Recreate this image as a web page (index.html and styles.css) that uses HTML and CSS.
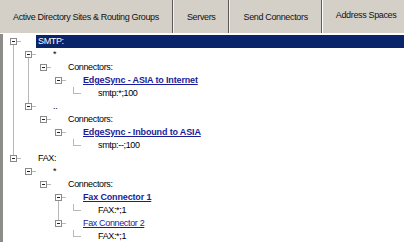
FILE: index.html
```html
<!DOCTYPE html>
<html lang="en">
<head>
    <meta charset="UTF-8">
    <title>Address Spaces</title>
    <link rel="stylesheet" href="styles.css">
</head>
<body>
    <div class="tabs">
        <div class="tab">Active Directory Sites &amp; Routing Groups</div>
        <div class="tab">Servers</div>
        <div class="tab">Send Connectors</div>
        <div class="tab active">Address Spaces</div>
    </div>

    <div class="panel">
        <ul class="tree">
            <li class="more">
                <div class="row"><span class="twist"><span class="box"></span></span><span class="label sel">SMTP:</span></div>
                <ul>
                    <li class="more">
                        <div class="row"><span class="twist"><span class="box"></span></span><span class="label">*</span></div>
                        <ul>
                            <li>
                                <div class="row"><span class="twist"><span class="box"></span></span><span class="label">Connectors:</span></div>
                                <ul>
                                    <li>
                                        <div class="row"><span class="twist"><span class="box"></span></span><a class="label link strong">EdgeSync - ASIA to Internet</a></div>
                                        <ul>
                                            <li><div class="row"><span class="twist leaf"></span><span class="label">smtp:*;100</span></div></li>
                                        </ul>
                                    </li>
                                </ul>
                            </li>
                        </ul>
                    </li>
                    <li>
                        <div class="row"><span class="twist"><span class="box"></span></span><span class="label">..</span></div>
                        <ul>
                            <li>
                                <div class="row"><span class="twist"><span class="box"></span></span><span class="label">Connectors:</span></div>
                                <ul>
                                    <li>
                                        <div class="row"><span class="twist"><span class="box"></span></span><a class="label link strong">EdgeSync - Inbound to ASIA</a></div>
                                        <ul>
                                            <li><div class="row"><span class="twist leaf"></span><span class="label">smtp:--;100</span></div></li>
                                        </ul>
                                    </li>
                                </ul>
                            </li>
                        </ul>
                    </li>
                </ul>
            </li>
            <li>
                <div class="row"><span class="twist"><span class="box"></span></span><span class="label">FAX:</span></div>
                <ul>
                    <li>
                        <div class="row"><span class="twist"><span class="box"></span></span><span class="label">*</span></div>
                        <ul>
                            <li>
                                <div class="row"><span class="twist"><span class="box"></span></span><span class="label">Connectors:</span></div>
                                <ul>
                                    <li class="more">
                                        <div class="row"><span class="twist"><span class="box"></span></span><a class="label link strong">Fax Connector 1</a></div>
                                        <ul>
                                            <li><div class="row"><span class="twist leaf"></span><span class="label">FAX:*;1</span></div></li>
                                        </ul>
                                    </li>
                                    <li>
                                        <div class="row"><span class="twist"><span class="box"></span></span><a class="label link">Fax Connector 2</a></div>
                                        <ul>
                                            <li><div class="row"><span class="twist leaf"></span><span class="label">FAX:*;1</span></div></li>
                                        </ul>
                                    </li>
                                </ul>
                            </li>
                        </ul>
                    </li>
                </ul>
            </li>
        </ul>
    </div>
</body>
</html>
```

FILE: styles.css
```css
body {
    margin: 0;
    font-family: "Liberation Sans", Arial, sans-serif;
    font-size: 9px;
    letter-spacing: -0.35px;
    color: #000;
    background: #fff;
    overflow: hidden;
}

/* tab strip */
.tabs {
    display: flex;
    height: 33px;
    background: #d4d0c8;
    border-bottom: 1px solid #fff;
}
.tab {
    padding: 0 13px;
    line-height: 34px;
    color: #111;
    border-right: 1px solid #5c5b57;
    white-space: nowrap;
}
.tab + .tab {
    border-left: 1px solid #f2f1ee;
}
.tab.active {
    line-height: 31px;
    border-left: 1px solid #fff;
    border-right: 1px solid #3f3e3b;
}

/* tree */
.panel {
    border-left: 3px solid #8e8c88;
    padding-top: 1px;
    height: 208px;
}
.tree, .tree ul {
    list-style: none;
    margin: 0;
    padding: 0;
}
.tree ul {
    padding-left: 15px;
}
.tree li {
    position: relative;
}
.tree li.more::after {
    content: "";
    position: absolute;
    left: 10px;
    top: 6px;
    bottom: -7px;
    border-left: 1px solid #b8b8b8;
}
.row {
    display: flex;
    align-items: center;
    height: 13px;
}
.twist {
    display: flex;
    align-items: center;
    width: 18px;
    height: 13px;
    flex: none;
}
.twist::after {
    content: "";
    flex: 1;
    border-top: 1px solid #b8b8b8;
}
.box {
    position: relative;
    z-index: 1;
    box-sizing: border-box;
    width: 7px;
    height: 7px;
    margin-left: 7px;
    border: 1px solid #8a8a8a;
    background: #fff;
}
.box::after {
    content: "";
    position: absolute;
    left: 1px;
    top: 2px;
    width: 3px;
    height: 1px;
    background: #222;
}
.twist.leaf {
    align-items: flex-start;
}
.twist.leaf::before {
    content: "";
    width: 7px;
    height: 6px;
    margin-left: 10px;
    border-left: 1px solid #b8b8b8;
    border-bottom: 1px solid #b8b8b8;
}
.twist.leaf::after {
    display: none;
}
.label {
    margin-left: 15px;
    padding: 0 2px;
    line-height: 13px;
    white-space: nowrap;
}
.label.sel {
    flex: 1;
    background: #0a246a;
    color: #fff;
}
.link {
    color: #1c1c98;
    text-decoration: underline;
}
.link.strong {
    font-weight: bold;
    letter-spacing: -0.15px;
}
```
